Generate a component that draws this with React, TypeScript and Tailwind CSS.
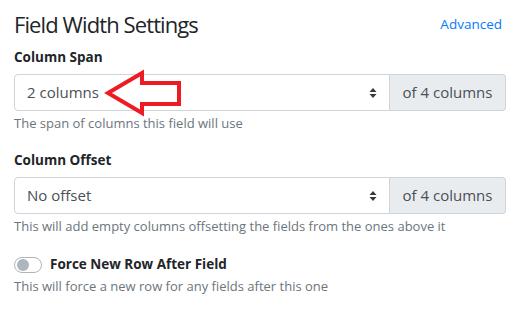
const font = { fontFamily: '"Open Sans", "Noto Sans", sans-serif' };

const Caret = () => (
  <svg width="8" height="12" viewBox="0 0 8 12" className="shrink-0">
    <path d="M4 1 L7.5 5 H0.5 Z" fill="#343a40" />
    <path d="M4 11 L7.5 7 H0.5 Z" fill="#343a40" />
  </svg>
);

const Select = ({ value }: { value: string }) => (
  <div className="flex h-[37px] w-full">
    <div className="flex flex-1 items-center justify-between rounded-l-[4px] border border-[#ced4da] bg-white pl-[12px] pr-[12px] text-[15px] text-[#495057]">
      <span>{value}</span>
      <Caret />
    </div>
    <div className="flex w-[116px] items-center justify-center rounded-r-[4px] border border-l-0 border-[#ced4da] bg-[#e9ecef] text-[15px] text-[#495057]">
      of 4 columns
    </div>
  </div>
);

export default function App() {
  return (
    <div className="relative h-[319px] w-[527px] bg-white pl-[14px] pr-[21px] pt-[6px] text-[#212529]" style={font}>
      <div className="flex h-[36px] items-center justify-between">
        <h4 className="text-[22px] leading-[29px] tracking-[-0.9px]">Field Width Settings</h4>
        <a className="pr-[4px] text-[13.5px] text-[#007bff]">Advanced</a>
      </div>

      <div className="mt-[5px] text-[13.5px] font-bold leading-[21px]">Column Span</div>
      <div className="mt-[6px]">
        <Select value="2 columns" />
      </div>
      <p className="mt-[4px] text-[13px] leading-[16px] text-[#6c757d]">The span of columns this field will use</p>

      <div className="mt-[19px] text-[13.5px] font-bold leading-[21px]">Column Offset</div>
      <div className="mt-[6px]">
        <Select value="No offset" />
      </div>
      <p className="mt-[4px] text-[13px] leading-[16px] text-[#6c757d]">This will add empty columns offsetting the fields from the ones above it</p>

      <div className="mt-[20px] flex items-center gap-[8px]">
        <div className="flex h-[16px] w-[28px] items-center rounded-full border border-[#adb5bd] bg-white pl-[2px]">
          <div className="h-[12px] w-[12px] rounded-full bg-[#adb5bd]" />
        </div>
        <span className="text-[13.5px] font-bold leading-[21px]">Force New Row After Field</span>
      </div>
      <p className="mt-[3px] text-[13px] leading-[16px] text-[#6c757d]">This will force a new row for any fields after this one</p>

      <svg className="absolute left-0 top-0" width="527" height="319">
        <polygon
          points="108,93 142,73 142,83 179,83 179,104 142,104 142,113"
          fill="none"
          stroke="#ed1c24"
          strokeWidth="4"
          strokeLinejoin="miter"
        />
      </svg>
    </div>
  );
}
